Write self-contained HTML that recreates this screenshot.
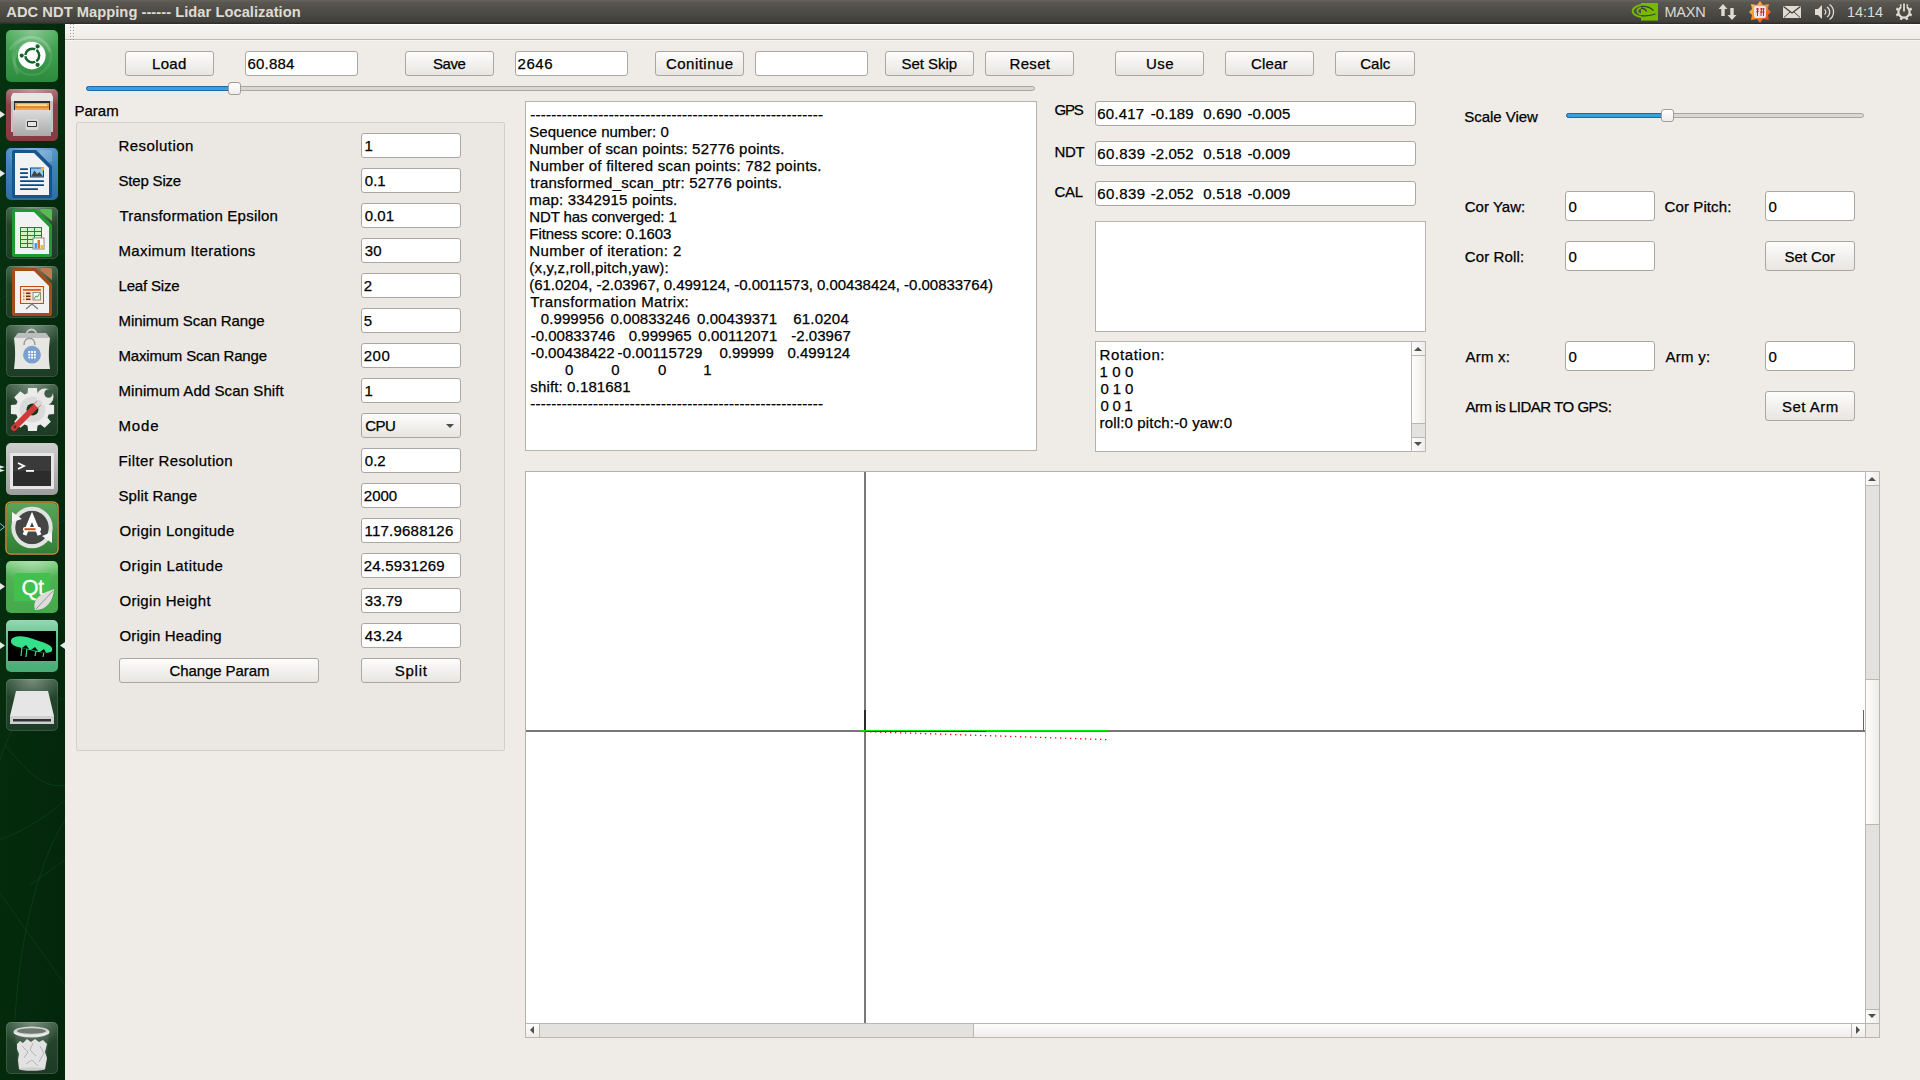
<!DOCTYPE html><html><head><meta charset="utf-8"><style>
html,body{margin:0;padding:0}
body{width:1920px;height:1080px;overflow:hidden;position:relative;background:#efebe7;font-family:"Liberation Sans",sans-serif;font-size:15px;color:#000}
.a{position:absolute}
.t{position:absolute;white-space:pre;line-height:17px;-webkit-text-stroke:0.25px currentColor}
</style></head><body>
<div class="a" style="left:0px;top:0px;width:1920px;height:24px;background:linear-gradient(#656359,#58564f 12%,#403f3b 92%,#2f2e2a 96%)"></div>
<div class="t" style="left:6.30px;top:4px;font-size:14.7px;font-weight:bold;color:#dfdbd2;letter-spacing:0.037px;-webkit-text-stroke:0.05px currentColor">ADC NDT Mapping ------ Lidar Localization</div>
<svg class="a" style="left:1620px;top:0" width="300" height="24" viewBox="1620 0 300 24"><defs><linearGradient id="imeg" x1="0" y1="0" x2="1" y2="1"><stop offset="0" stop-color="#f8d050"/><stop offset="0.5" stop-color="#f09030"/><stop offset="1" stop-color="#e02828"/></linearGradient></defs><defs><clipPath id="nvl"><rect x="1620" y="0" width="21" height="24"/></clipPath><clipPath id="nvr"><rect x="1641" y="0" width="17" height="24"/></clipPath></defs><rect x="1641" y="3" width="17" height="17.6" fill="#76b900"/><g clip-path="url(#nvl)" fill="none" stroke="#76b900"><ellipse cx="1644.5" cy="11" rx="11.8" ry="6.3" stroke-width="2"/><ellipse cx="1644.5" cy="11" rx="7.2" ry="3.9" stroke-width="1.8"/><ellipse cx="1644.5" cy="11" rx="3.2" ry="1.6" fill="#76b900" stroke-width="1"/></g><g clip-path="url(#nvr)" fill="none" stroke="#3c3b37" stroke-width="1.3"><path d="M1641 6.5 C1646 6 1651 8 1653.5 10.5"/><path d="M1641 15.5 C1646 17 1652 15 1655.5 14"/><path d="M1641 8 C1644 8.5 1646 10 1646.5 11.5"/></g><text x="1664.5" y="17" font-family="Liberation Sans" font-size="14.5" textLength="41.2" fill="#dfdbd2">MAXN</text><path d="M1723 4 L1727.5 9 L1724.7 9 L1724.7 16 L1721.3 16 L1721.3 9 L1718.5 9Z" fill="#dfdbd2"/><path d="M1732 20 L1736.5 15 L1733.7 15 L1733.7 8 L1730.3 8 L1730.3 15 L1727.5 15Z" fill="#dfdbd2"/><polygon points="1760,1 1763,5 1769,4 1768,9 1771,12 1768,15 1769,20 1763,19 1760,23 1757,19 1751,20 1752,15 1749,12 1752,9 1751,4 1757,5" fill="url(#imeg)"/><rect x="1754" y="6" width="12" height="12" rx="2" fill="#f2e4e4"/><path d="M1756 9 L1759 9 M1757.5 8 L1757.5 16 M1756 12 L1759 11 M1760 9 L1764.5 9 M1760 12 L1764.5 12 M1761.5 8 L1761 16 M1763.5 8 L1763.5 16" stroke="#d02030" stroke-width="1"/><rect x="1783" y="6" width="18" height="12" fill="#dfdbd2"/><path d="M1783.5 6.5 L1792 13 L1800.5 6.5" stroke="#3c3b37" stroke-width="1.2" fill="none"/><path d="M1784 17.5 L1790 12 M1800 17.5 L1794 12" stroke="#3c3b37" stroke-width="1"/><path d="M1815 9 L1818 9 L1822 5 L1822 19 L1818 15 L1815 15Z" fill="#dfdbd2"/><path d="M1824.5 9.5 A3 3 0 0 1 1824.5 14.5 M1827 7 A6 6 0 0 1 1827 17 M1829.5 4.5 A9 9 0 0 1 1829.5 19.5" stroke="#dfdbd2" stroke-width="1.3" fill="none"/><text x="1847" y="17" font-family="Liberation Sans" font-size="14.5" textLength="36" fill="#dfdbd2">14:14</text><circle cx="1904" cy="12" r="5.6" fill="none" stroke="#dfdbd2" stroke-width="2.2"/><g stroke="#dfdbd2" stroke-width="2.6"><path d="M1909.7 14.4 L1911.7 15.2"/><path d="M1906.4 17.7 L1907.2 19.7"/><path d="M1901.6 17.7 L1900.8 19.7"/><path d="M1898.3 14.4 L1896.3 15.2"/><path d="M1898.3 9.6 L1896.3 8.8"/><path d="M1901.6 6.3 L1900.8 4.3"/><path d="M1906.4 6.3 L1907.2 4.3"/><path d="M1909.7 9.6 L1911.7 8.8"/></g><rect x="1901.5" y="3" width="5" height="7" fill="#4a4944"/><rect x="1903.1" y="3.5" width="1.8" height="8" fill="#dfdbd2"/></svg>
<svg class="a" style="left:0;top:0" width="65" height="1080" viewBox="0 0 65 1080"><defs>
<linearGradient id="tdark" x1="0" y1="0" x2="0" y2="1"><stop offset="0" stop-color="#3a5a42"/><stop offset="0.35" stop-color="#24442c"/><stop offset="1" stop-color="#1d3c25"/></linearGradient>
<radialGradient id="shine" cx="0.5" cy="0" r="0.55"><stop offset="0" stop-color="#fff" stop-opacity="0.32"/><stop offset="1" stop-color="#fff" stop-opacity="0"/></radialGradient>
<linearGradient id="tgreen" x1="0" y1="0" x2="0" y2="1"><stop offset="0" stop-color="#4fae5e"/><stop offset="1" stop-color="#2b8a3c"/></linearGradient>
<linearGradient id="tblue" x1="0" y1="0" x2="0" y2="1"><stop offset="0" stop-color="#4a8fc4"/><stop offset="1" stop-color="#2c6fa6"/></linearGradient>
<linearGradient id="tred" x1="0" y1="0" x2="0" y2="1"><stop offset="0" stop-color="#a86a72"/><stop offset="0.3" stop-color="#8c424a"/><stop offset="1" stop-color="#883a42"/></linearGradient>
<linearGradient id="tgray" x1="0" y1="0" x2="0" y2="1"><stop offset="0" stop-color="#cfcfcf"/><stop offset="1" stop-color="#9c9c9c"/></linearGradient>
<linearGradient id="tqt" x1="0" y1="0" x2="0" y2="1"><stop offset="0" stop-color="#8ad48a"/><stop offset="0.3" stop-color="#4fb153"/><stop offset="1" stop-color="#45a84a"/></linearGradient>
<linearGradient id="tlid" x1="0" y1="0" x2="0" y2="1"><stop offset="0" stop-color="#98d8b4"/><stop offset="0.35" stop-color="#62c08e"/><stop offset="1" stop-color="#48ac76"/></linearGradient>
<linearGradient id="tupd" x1="0" y1="0" x2="0" y2="1"><stop offset="0" stop-color="#5aa55a"/><stop offset="1" stop-color="#2f7f34"/></linearGradient>
<linearGradient id="cab" x1="0" y1="0" x2="0" y2="1"><stop offset="0" stop-color="#dcdcdc"/><stop offset="1" stop-color="#a9a9a9"/></linearGradient>
<linearGradient id="bgl" x1="0" y1="0" x2="1" y2="1"><stop offset="0" stop-color="#063210"/><stop offset="0.5" stop-color="#042a0c"/><stop offset="1" stop-color="#03260b"/></linearGradient>
</defs><rect x="0" y="24" width="65" height="1056" fill="url(#bgl)"/><g stroke="#1e5a2a" stroke-opacity="0.35" stroke-width="1" fill="none"><path d="M0 893 L65 985"/><path d="M30 885 L65 860"/><path d="M0 300 L65 250"/><path d="M0 560 L65 520"/><path d="M0 760 C20 700 40 690 65 700"/><path d="M5 745 C25 770 45 790 65 785"/><path d="M15 1020 C20 930 40 860 65 820"/><path d="M0 840 C25 830 45 818 65 800"/></g><rect x="6" y="30" width="52" height="52" rx="5" fill="url(#tgreen)" /><rect x="6" y="30" width="52" height="52" rx="5" fill="url(#shine)"/><path d="M10 50 C20 32 44 34 50 52" fill="none" stroke="#fff" stroke-opacity="0.14" stroke-width="3"/><path d="M18 74 C10 60 16 46 30 42" fill="none" stroke="#fff" stroke-opacity="0.12" stroke-width="3"/><circle cx="32" cy="56" r="19" fill="none" stroke="#fff" stroke-opacity="0.1" stroke-width="2.5"/><circle cx="31.8" cy="55.6" r="13.8" fill="#fff"/><circle cx="32.3" cy="55.6" r="6.9" fill="none" stroke="#15642a" stroke-width="2.5"/><path d="M32.3  55.6 L37.30 46.94" stroke="#fff" stroke-width="1.3"/><circle cx="37.60" cy="46.42" r="2.1" fill="#15642a"/><path d="M32.3  55.6 L22.30 55.60" stroke="#fff" stroke-width="1.3"/><circle cx="21.70" cy="55.60" r="2.1" fill="#15642a"/><path d="M32.3  55.6 L37.30 64.26" stroke="#fff" stroke-width="1.3"/><circle cx="37.60" cy="64.78" r="2.1" fill="#15642a"/><rect x="6" y="89" width="52" height="52" rx="5" fill="url(#tred)" /><rect x="6" y="89" width="52" height="52" rx="5" fill="url(#shine)"/><path d="M13 93 L51 93 L53 97 L53 132 L11 132 L11 97Z" fill="#c4c4c4"/><path d="M13 93 L51 93 L53 97 L53 101 L11 101 L11 97Z" fill="#e6e6e6"/><rect x="14" y="101" width="36" height="9" fill="#2e2e2e"/><rect x="15" y="103" width="34" height="7" fill="#f0a848"/><rect x="17" y="104.5" width="30" height="1.2" fill="#fff4e0"/><rect x="15" y="106.5" width="34" height="1" fill="#d06a2a"/><rect x="13" y="110" width="38" height="26" fill="url(#cab)"/><rect x="25.5" y="119" width="13" height="11" rx="2" fill="#d8d8d8"/><rect x="27" y="121" width="10" height="6" rx="1" fill="#333"/><rect x="28" y="122" width="8" height="4" fill="#e4e4e4"/><rect x="6" y="148" width="52" height="52" rx="5" fill="url(#tblue)" /><rect x="6" y="148" width="52" height="52" rx="5" fill="url(#shine)"/><rect x="40" y="150" width="12" height="12" rx="2" fill="#fff" fill-opacity="0.15"/><path d="M12 152 Q12 150 14 150 L36 150 L52 166 L52 196 Q52 198 50 198 L14 198 Q12 198 12 196Z" fill="#15548c"/><path d="M15 153 L34 153 L49 168 L49 195 L15 195Z" fill="#f2f2f2"/><rect x="20" y="168.2" width="8" height="1.8" rx="0.5" fill="#0d4a84"/><rect x="20" y="172.2" width="8" height="1.8" rx="0.5" fill="#0d4a84"/><rect x="20" y="176.2" width="8" height="1.8" rx="0.5" fill="#0d4a84"/><rect x="20" y="180.2" width="24" height="1.8" rx="0.5" fill="#0d4a84"/><rect x="20" y="184.2" width="24" height="1.8" rx="0.5" fill="#0d4a84"/><rect x="20" y="188.2" width="18" height="1.8" rx="0.5" fill="#0d4a84"/><rect x="30" y="167.5" width="14" height="10" fill="#0d4a84"/><rect x="31" y="168.5" width="12" height="8" fill="#8ec8ee"/><path d="M31 176.5 L34.5 170.5 L37 174 L39.5 172 L43 176.5Z" fill="#444"/><circle cx="42.5" cy="169" r="1.8" fill="#e8c030"/><rect x="6" y="207" width="52" height="52" rx="5" fill="url(#tdark)" /><rect x="6.5" y="207.5" width="51" height="51" rx="4.5" fill="none" stroke="#fff" stroke-opacity="0.12"/><rect x="6" y="207" width="52" height="52" rx="5" fill="url(#shine)"/><path d="M40 211 Q40 209 42 209 L50 209 Q52 209 52 211 L52 221 Z" fill="#58bc50"/><path d="M12 211 Q12 209 14 209 L36 209 L52 225 L52 255 Q52 257 50 257 L14 257 Q12 257 12 255Z" fill="#1e9a30"/><path d="M15 212 L34 212 L49 227 L49 254 L15 254Z" fill="#f2f2f2"/><rect x="20" y="227" width="22" height="21" fill="#178a28"/><rect x="21" y="228" width="6" height="3" fill="#d2f2c8"/><rect x="28" y="228" width="6" height="3" fill="#d2f2c8"/><rect x="35" y="228" width="6" height="3" fill="#d2f2c8"/><rect x="21" y="232" width="6" height="3" fill="#d2f2c8"/><rect x="28" y="232" width="6" height="3" fill="#d2f2c8"/><rect x="35" y="232" width="6" height="3" fill="#d2f2c8"/><rect x="21" y="236" width="6" height="3" fill="#d2f2c8"/><rect x="28" y="236" width="6" height="3" fill="#d2f2c8"/><rect x="35" y="236" width="6" height="3" fill="#d2f2c8"/><rect x="21" y="240" width="6" height="3" fill="#d2f2c8"/><rect x="28" y="240" width="6" height="3" fill="#d2f2c8"/><rect x="35" y="240" width="6" height="3" fill="#d2f2c8"/><rect x="21" y="244" width="6" height="3" fill="#d2f2c8"/><rect x="28" y="244" width="6" height="3" fill="#d2f2c8"/><rect x="35" y="244" width="6" height="3" fill="#d2f2c8"/><rect x="33" y="238" width="11" height="11" fill="#fff" stroke="#888" stroke-width="1"/><rect x="34.5" y="243" width="2.5" height="5.5" fill="#3a9ee8"/><rect x="37.5" y="240" width="2.5" height="8.5" fill="#e8702a"/><rect x="40.5" y="245" width="2.5" height="3.5" fill="#f0c020"/><rect x="6" y="266" width="52" height="52" rx="5" fill="url(#tdark)" /><rect x="6.5" y="266.5" width="51" height="51" rx="4.5" fill="none" stroke="#fff" stroke-opacity="0.12"/><rect x="6" y="266" width="52" height="52" rx="5" fill="url(#shine)"/><path d="M40 270 Q40 268 42 268 L50 268 Q52 268 52 270 L52 280 Z" fill="#c07a50"/><path d="M12 270 Q12 268 14 268 L36 268 L52 284 L52 314 Q52 316 50 316 L14 316 Q12 316 12 314Z" fill="#a44c1a"/><path d="M15 271 L34 271 L49 286 L49 313 L15 313Z" fill="#f2f2f2"/><rect x="20" y="286" width="24" height="18" fill="#c04e14"/><rect x="21" y="287" width="22" height="16" fill="#fde6d6"/><rect x="23" y="289" width="18" height="1.8" fill="#d8601e"/><rect x="23" y="292.5" width="1.5" height="1.5" fill="#e8884a"/><rect x="26" y="292.5" width="4.5" height="1.6" fill="#7a2a0a"/><rect x="23" y="295.5" width="1.5" height="1.5" fill="#e8884a"/><rect x="26" y="295.5" width="4.5" height="1.6" fill="#7a2a0a"/><rect x="23" y="298.5" width="1.5" height="1.5" fill="#e8884a"/><rect x="26" y="298.5" width="4.5" height="1.6" fill="#7a2a0a"/><rect x="33" y="292.5" width="7.5" height="7.5" fill="#f4f4f4" stroke="#777" stroke-width="0.8"/><path d="M34 299 L36 296 L37.5 297 L39.5 293.5" stroke="#2a9a2a" stroke-width="0.9" fill="none"/><path d="M26 309 L32 304 L38 309" stroke="#777" stroke-width="1.2" fill="none"/><rect x="6" y="325" width="52" height="52" rx="5" fill="url(#tdark)" /><rect x="6.5" y="325.5" width="51" height="51" rx="4.5" fill="none" stroke="#fff" stroke-opacity="0.12"/><rect x="6" y="325" width="52" height="52" rx="5" fill="url(#shine)"/><path d="M26 337 C26 327 37 327 37 337" stroke="#c8c8c8" stroke-width="1.8" fill="none"/><path d="M18 333 L46 333 L50 338 L14 338Z" fill="#bdbdbd"/><path d="M14 338 L50 338 C48.5 350 48.5 358 50 369 L14 369 C15.5 358 15.5 350 14 338 Z" fill="#e6e6e3"/><path d="M24 345 C24 336 35 336 35 345" stroke="#9a9a9a" stroke-width="1.5" fill="none"/><circle cx="32" cy="354.7" r="8.9" fill="#7aa0d0"/><rect x="28.3" y="351.0" width="1.9" height="1.9" fill="#fff"/><rect x="28.3" y="353.8" width="1.9" height="1.9" fill="#fff"/><rect x="28.3" y="356.6" width="1.9" height="1.9" fill="#fff"/><rect x="31.1" y="351.0" width="1.9" height="1.9" fill="#fff"/><rect x="31.1" y="353.8" width="1.9" height="1.9" fill="#fff"/><rect x="31.1" y="356.6" width="1.9" height="1.9" fill="#fff"/><rect x="33.9" y="351.0" width="1.9" height="1.9" fill="#fff"/><rect x="33.9" y="353.8" width="1.9" height="1.9" fill="#fff"/><rect x="33.9" y="356.6" width="1.9" height="1.9" fill="#fff"/><rect x="6" y="384" width="52" height="52" rx="5" fill="url(#tdark)" /><rect x="6.5" y="384.5" width="51" height="51" rx="4.5" fill="none" stroke="#fff" stroke-opacity="0.12"/><rect x="6" y="384" width="52" height="52" rx="5" fill="url(#shine)"/><polygon points="48.7,404.5 54.1,405.1 54.1,413.9 48.7,414.5 47.5,417.4 50.8,421.7 44.7,427.8 40.4,424.5 37.5,425.7 36.9,431.1 28.1,431.1 27.5,425.7 24.6,424.5 20.3,427.8 14.2,421.7 17.5,417.4 16.3,414.5 10.9,413.9 10.9,405.1 16.3,404.5 17.5,401.6 14.2,397.3 20.3,391.2 24.6,394.5 27.5,393.3 28.1,387.9 36.9,387.9 37.5,393.3 40.4,394.5 44.7,391.2 50.8,397.3 47.5,401.6" fill="#ececec"/><circle cx="32.5" cy="409.5" r="13" fill="#dadada"/><circle cx="32.5" cy="409.5" r="6" fill="#143a1c"/><path d="M14 428 L38 404" stroke="#d03a36" stroke-width="6" stroke-linecap="round"/><circle cx="15" cy="427" r="1.4" fill="#2a3a2a"/><circle cx="45" cy="397" r="8.5" fill="#e8e8e8"/><circle cx="48.5" cy="393.5" r="4.2" fill="#3d5d45"/><path d="M48.5 393.5 L55 387 L55 393Z" fill="#3d5d45"/><path d="M36 406 L41 401" stroke="#d8d8d8" stroke-width="5"/><rect x="6" y="443" width="52" height="52" rx="5" fill="url(#tgray)" /><rect x="10" y="453" width="44" height="36" fill="#e6e6e6"/><rect x="13" y="456" width="38" height="30" fill="#2c2c2c"/><rect x="13" y="456" width="38" height="15" fill="#3a3a3a"/><path d="M18 463 L24 466 L18 469" stroke="#fff" stroke-width="1.8" fill="none"/><rect x="26" y="470" width="8" height="1.8" fill="#fff"/><rect x="6" y="502" width="52" height="52" rx="5" fill="none" stroke="#d09040" stroke-width="1.5"/><rect x="7" y="503" width="50" height="50" rx="4" fill="url(#tupd)"/><circle cx="32" cy="527.5" r="18.7" fill="none" stroke="#e2e2e2" stroke-width="4"/><circle cx="32" cy="527.5" r="16.5" fill="#454545"/><path d="M12 512 L22 519 L12 522Z" fill="#f4f4f4"/><path d="M52 543 L42 536 L52 532Z" fill="#f4f4f4"/><path d="M24.5 535 L32 517 L39.5 535" stroke="#fff" stroke-width="4" fill="none"/><rect x="23" y="527" width="18" height="4.5" rx="2" fill="#fff"/><rect x="24.5" y="528.2" width="11" height="2" fill="#e04a10"/><rect x="6" y="561" width="52" height="52" rx="5" fill="url(#tqt)" /><rect x="6" y="561" width="52" height="52" rx="5" fill="url(#shine)"/><path d="M17 573 L50 573 L50 601 L14 601 L14 576Z" fill="#41c04e"/><text x="21.5" y="595" font-family="Liberation Sans" font-size="22" textLength="22.5" fill="#fff" stroke="#fff" stroke-width="0.3">Qt</text><path d="M35 610 C32 599 40 594 54 589 C53 601 47 610 35 610Z" fill="#dedcdc"/><path d="M36 609 L53 591" stroke="#666" stroke-width="0.6"/><rect x="6" y="620" width="52" height="52" rx="5" fill="url(#tlid)" /><rect x="8" y="631" width="48" height="30" fill="#000"/><path d="M11 640 C14 634 26 636 36 640 C46 643 54 646 52 651 C50 654 40 653 30 650 C20 647 10 647 11 640Z" fill="#35e08a"/><path d="M22 647 L21 656 M27 648 L26 657 M36 651 L35 656 M44 652 L43 657" stroke="#35e08a" stroke-width="1.2"/><path d="M22 648 L26 645 L29 649Z M31 650 L35 647 L38 651Z M40 652 L44 649 L46 653Z" fill="#000"/><rect x="6" y="679" width="52" height="52" rx="5" fill="url(#tdark)" /><rect x="6.5" y="679.5" width="51" height="51" rx="4.5" fill="none" stroke="#fff" stroke-opacity="0.12"/><rect x="6" y="679" width="52" height="52" rx="5" fill="url(#shine)"/><path d="M16 691 L48 691 L54 716 L10 716Z" fill="#e6e6e6"/><rect x="10" y="716" width="44" height="8" fill="#d0d0d0"/><rect x="13" y="719" width="38" height="2.5" fill="#333"/><rect x="6" y="1022" width="52" height="52" rx="5" fill="url(#tdark)" /><rect x="6.5" y="1022.5" width="51" height="51" rx="4.5" fill="none" stroke="#fff" stroke-opacity="0.12"/><rect x="6" y="1022" width="52" height="52" rx="5" fill="url(#shine)"/><path d="M15 1032 L49 1032 L46 1069 L18 1069Z" fill="#fff" fill-opacity="0.07"/><path d="M17 1044 L20 1041 L23 1043 L27 1039 L31 1042 L35 1039 L39 1042 L43 1040 L47 1044 L45 1052 L47 1058 L45 1069 L19 1069 L18 1060 L19 1054 L17 1049Z" fill="#e2e2e2"/><path d="M22 1046 L28 1052 L24 1058 M33 1043 L30 1050 L36 1056 M40 1046 L44 1053 L39 1062 M26 1064 L32 1060 L38 1066" stroke="#b4b4b4" stroke-width="1" fill="none"/><ellipse cx="31.5" cy="1032" rx="18" ry="5.5" fill="#d6d6d6"/><ellipse cx="31.5" cy="1031" rx="14.5" ry="2.8" fill="#6c7a70"/><path d="M14 1033 Q31.5 1039 49 1033" stroke="#f4f4f4" stroke-width="1.2" fill="none"/><ellipse cx="32" cy="1069" rx="13" ry="1.8" fill="#cfcfcf"/><g fill="#e8e8e8"><path d="M0 111 L5 114.5 L0 118Z"/><path d="M0 170 L5 173.5 L0 177Z"/><path d="M0 465.5 L5 467 L0 468.5Z"/><path d="M0 469 L5 470.5 L0 472Z"/><path d="M0 583 L5 586.5 L0 590Z"/><path d="M0 642 L5 645.5 L0 649Z"/><path d="M65 642 L60 645.5 L65 649Z"/></g><path d="M0 523.5 L4.5 527 L0 530.5" stroke="#6ac8e8" stroke-width="1" fill="none"/></svg>
<div class="a" style="left:65px;top:24px;width:1855px;height:1056px;background:#efebe7"></div>
<div class="a" style="left:65px;top:24px;width:1855px;height:15px;background:linear-gradient(#f8f6f3,#eeebe7)"></div>
<div class="a" style="left:65px;top:24px;width:1855px;height:1px;background:#fdfdfc"></div>
<div class="a" style="left:65px;top:39px;width:1855px;height:1px;background:#bcb8b3"></div>
<div class="a" style="left:65px;top:40px;width:1855px;height:1px;background:#f6f4f1"></div>
<svg class="a" style="left:68px;top:22px" width="10" height="22"><rect x="3" y="3" width="1" height="1" fill="#fbfaf8"/><rect x="2" y="2" width="1" height="1" fill="#9a9894"/><rect x="3" y="6" width="1" height="1" fill="#fbfaf8"/><rect x="2" y="5" width="1" height="1" fill="#9a9894"/><rect x="3" y="9" width="1" height="1" fill="#fbfaf8"/><rect x="2" y="8" width="1" height="1" fill="#9a9894"/><rect x="3" y="12" width="1" height="1" fill="#fbfaf8"/><rect x="2" y="11" width="1" height="1" fill="#9a9894"/><rect x="3" y="15" width="1" height="1" fill="#fbfaf8"/><rect x="2" y="14" width="1" height="1" fill="#9a9894"/><rect x="3" y="18" width="1" height="1" fill="#fbfaf8"/><rect x="2" y="17" width="1" height="1" fill="#9a9894"/><rect x="6" y="3" width="1" height="1" fill="#fbfaf8"/><rect x="5" y="2" width="1" height="1" fill="#9a9894"/><rect x="6" y="6" width="1" height="1" fill="#fbfaf8"/><rect x="5" y="5" width="1" height="1" fill="#9a9894"/><rect x="6" y="9" width="1" height="1" fill="#fbfaf8"/><rect x="5" y="8" width="1" height="1" fill="#9a9894"/><rect x="6" y="12" width="1" height="1" fill="#fbfaf8"/><rect x="5" y="11" width="1" height="1" fill="#9a9894"/><rect x="6" y="15" width="1" height="1" fill="#fbfaf8"/><rect x="5" y="14" width="1" height="1" fill="#9a9894"/><rect x="6" y="18" width="1" height="1" fill="#fbfaf8"/><rect x="5" y="17" width="1" height="1" fill="#9a9894"/></svg>
<div class="a" style="left:125px;top:51px;width:89px;height:25px;box-sizing:border-box;border:1px solid #aaa6a1;border-radius:3px;background:linear-gradient(#fdfdfc,#e8e5e1)"></div>
<div class="t" style="left:152.00px;top:55px;font-size:15px;font-weight:normal;color:#000;letter-spacing:0.333px">Load</div>
<div class="a" style="left:245px;top:51px;width:113px;height:25px;box-sizing:border-box;border:1px solid #aba7a2;border-radius:3px;background:#fff"></div>
<div class="t" style="left:247.50px;top:55px;font-size:15px;font-weight:normal;color:#000;letter-spacing:0.200px">60.884</div>
<div class="a" style="left:405px;top:51px;width:89px;height:25px;box-sizing:border-box;border:1px solid #aaa6a1;border-radius:3px;background:linear-gradient(#fdfdfc,#e8e5e1)"></div>
<div class="t" style="left:433.00px;top:55px;font-size:15px;font-weight:normal;color:#000;letter-spacing:-0.417px">Save</div>
<div class="a" style="left:515px;top:51px;width:113px;height:25px;box-sizing:border-box;border:1px solid #aba7a2;border-radius:3px;background:#fff"></div>
<div class="t" style="left:517.50px;top:55px;font-size:15px;font-weight:normal;color:#000;letter-spacing:0.583px">2646</div>
<div class="a" style="left:655px;top:51px;width:89px;height:25px;box-sizing:border-box;border:1px solid #aaa6a1;border-radius:3px;background:linear-gradient(#fdfdfc,#e8e5e1)"></div>
<div class="t" style="left:666.00px;top:55px;font-size:15px;font-weight:normal;color:#000;letter-spacing:0.469px">Conitinue</div>
<div class="a" style="left:755px;top:51px;width:113px;height:25px;box-sizing:border-box;border:1px solid #aba7a2;border-radius:3px;background:#fff"></div>
<div class="a" style="left:885px;top:51px;width:89px;height:25px;box-sizing:border-box;border:1px solid #aaa6a1;border-radius:3px;background:linear-gradient(#fdfdfc,#e8e5e1)"></div>
<div class="t" style="left:901.50px;top:55px;font-size:15px;font-weight:normal;color:#000;letter-spacing:-0.036px">Set Skip</div>
<div class="a" style="left:985px;top:51px;width:89px;height:25px;box-sizing:border-box;border:1px solid #aaa6a1;border-radius:3px;background:linear-gradient(#fdfdfc,#e8e5e1)"></div>
<div class="t" style="left:1009.60px;top:55px;font-size:15px;font-weight:normal;color:#000;letter-spacing:0.287px">Reset</div>
<div class="a" style="left:1115px;top:51px;width:89px;height:25px;box-sizing:border-box;border:1px solid #aaa6a1;border-radius:3px;background:linear-gradient(#fdfdfc,#e8e5e1)"></div>
<div class="t" style="left:1146.00px;top:55px;font-size:15px;font-weight:normal;color:#000;letter-spacing:0.500px">Use</div>
<div class="a" style="left:1225px;top:51px;width:89px;height:25px;box-sizing:border-box;border:1px solid #aaa6a1;border-radius:3px;background:linear-gradient(#fdfdfc,#e8e5e1)"></div>
<div class="t" style="left:1251.00px;top:55px;font-size:15px;font-weight:normal;color:#000;letter-spacing:0.188px">Clear</div>
<div class="a" style="left:1335px;top:51px;width:80px;height:25px;box-sizing:border-box;border:1px solid #aaa6a1;border-radius:3px;background:linear-gradient(#fdfdfc,#e8e5e1)"></div>
<div class="t" style="left:1360.25px;top:55px;font-size:15px;font-weight:normal;color:#000;letter-spacing:0.000px">Calc</div>
<div class="a" style="left:86px;top:86px;width:949px;height:5px;box-sizing:border-box;border:1px solid #a9a5a0;border-radius:3px;background:#d9d7d3"></div>
<div class="a" style="left:86px;top:86px;width:146px;height:5px;box-sizing:border-box;border:1px solid #1f6aa3;border-radius:3px;background:#3d9de3"></div>
<div class="a" style="left:228px;top:82px;width:13px;height:13px;box-sizing:border-box;border:1px solid #a19d98;border-radius:3px;background:linear-gradient(#ffffff,#efedea)"></div>
<div class="t" style="left:74.50px;top:102px;font-size:15px;font-weight:normal;color:#000;letter-spacing:0.000px">Param</div>
<div class="a" style="left:76px;top:122px;width:429px;height:629px;box-sizing:border-box;border:1px solid #d3cfca;border-radius:2px;background:#ebe8e4"></div>
<div class="t" style="left:118.50px;top:137px;font-size:15px;font-weight:normal;color:#000;letter-spacing:0.444px">Resolution</div>
<div class="a" style="left:361px;top:133px;width:100px;height:25px;box-sizing:border-box;border:1px solid #aba7a2;border-radius:3px;background:#fff"></div>
<div class="t" style="left:364.50px;top:137px;font-size:15px;font-weight:normal;color:#000;letter-spacing:0.000px">1</div>
<div class="t" style="left:118.50px;top:172px;font-size:15px;font-weight:normal;color:#000;letter-spacing:-0.188px">Step Size</div>
<div class="a" style="left:361px;top:168px;width:100px;height:25px;box-sizing:border-box;border:1px solid #aba7a2;border-radius:3px;background:#fff"></div>
<div class="t" style="left:364.80px;top:172px;font-size:15px;font-weight:normal;color:#000;letter-spacing:0.000px">0.1</div>
<div class="t" style="left:119.50px;top:207px;font-size:15px;font-weight:normal;color:#000;letter-spacing:0.226px">Transformation Epsilon</div>
<div class="a" style="left:361px;top:203px;width:100px;height:25px;box-sizing:border-box;border:1px solid #aba7a2;border-radius:3px;background:#fff"></div>
<div class="t" style="left:364.80px;top:207px;font-size:15px;font-weight:normal;color:#000;letter-spacing:0.000px">0.01</div>
<div class="t" style="left:118.50px;top:242px;font-size:15px;font-weight:normal;color:#000;letter-spacing:0.353px">Maximum Iterations</div>
<div class="a" style="left:361px;top:238px;width:100px;height:25px;box-sizing:border-box;border:1px solid #aba7a2;border-radius:3px;background:#fff"></div>
<div class="t" style="left:364.80px;top:242px;font-size:15px;font-weight:normal;color:#000;letter-spacing:0.000px">30</div>
<div class="t" style="left:118.50px;top:277px;font-size:15px;font-weight:normal;color:#000;letter-spacing:-0.188px">Leaf Size</div>
<div class="a" style="left:361px;top:273px;width:100px;height:25px;box-sizing:border-box;border:1px solid #aba7a2;border-radius:3px;background:#fff"></div>
<div class="t" style="left:363.80px;top:277px;font-size:15px;font-weight:normal;color:#000;letter-spacing:0.000px">2</div>
<div class="t" style="left:118.50px;top:312px;font-size:15px;font-weight:normal;color:#000;letter-spacing:-0.088px">Minimum Scan Range</div>
<div class="a" style="left:361px;top:308px;width:100px;height:25px;box-sizing:border-box;border:1px solid #aba7a2;border-radius:3px;background:#fff"></div>
<div class="t" style="left:363.80px;top:312px;font-size:15px;font-weight:normal;color:#000;letter-spacing:0.000px">5</div>
<div class="t" style="left:118.50px;top:347px;font-size:15px;font-weight:normal;color:#000;letter-spacing:-0.191px">Maximum Scan Range</div>
<div class="a" style="left:361px;top:343px;width:100px;height:25px;box-sizing:border-box;border:1px solid #aba7a2;border-radius:3px;background:#fff"></div>
<div class="t" style="left:363.80px;top:347px;font-size:15px;font-weight:normal;color:#000;letter-spacing:0.475px">200</div>
<div class="t" style="left:118.50px;top:382px;font-size:15px;font-weight:normal;color:#000;letter-spacing:0.083px">Minimum Add Scan Shift</div>
<div class="a" style="left:361px;top:378px;width:100px;height:25px;box-sizing:border-box;border:1px solid #aba7a2;border-radius:3px;background:#fff"></div>
<div class="t" style="left:364.50px;top:382px;font-size:15px;font-weight:normal;color:#000;letter-spacing:0.000px">1</div>
<div class="t" style="left:118.50px;top:417px;font-size:15px;font-weight:normal;color:#000;letter-spacing:0.833px">Mode</div>
<div class="a" style="left:361px;top:413px;width:100px;height:25px;box-sizing:border-box;border:1px solid #aaa6a1;border-radius:3px;background:linear-gradient(#fdfdfc,#e8e5e1)"></div>
<div class="t" style="left:365.25px;top:417px;font-size:15px;font-weight:normal;color:#000;letter-spacing:-0.500px">CPU</div>
<div class="a" style="left:446px;top:424px;width:0;height:0;border-left:4px solid transparent;border-right:4px solid transparent;border-top:4px solid #4c4c4c"></div>
<div class="t" style="left:118.50px;top:452px;font-size:15px;font-weight:normal;color:#000;letter-spacing:0.359px">Filter Resolution</div>
<div class="a" style="left:361px;top:448px;width:100px;height:25px;box-sizing:border-box;border:1px solid #aba7a2;border-radius:3px;background:#fff"></div>
<div class="t" style="left:364.80px;top:452px;font-size:15px;font-weight:normal;color:#000;letter-spacing:0.000px">0.2</div>
<div class="t" style="left:118.50px;top:487px;font-size:15px;font-weight:normal;color:#000;letter-spacing:0.100px">Split Range</div>
<div class="a" style="left:361px;top:483px;width:100px;height:25px;box-sizing:border-box;border:1px solid #aba7a2;border-radius:3px;background:#fff"></div>
<div class="t" style="left:363.80px;top:487px;font-size:15px;font-weight:normal;color:#000;letter-spacing:0.000px">2000</div>
<div class="t" style="left:119.50px;top:522px;font-size:15px;font-weight:normal;color:#000;letter-spacing:0.317px">Origin Longitude</div>
<div class="a" style="left:361px;top:518px;width:100px;height:25px;box-sizing:border-box;border:1px solid #aba7a2;border-radius:3px;background:#fff"></div>
<div class="t" style="left:364.50px;top:522px;font-size:15px;font-weight:normal;color:#000;letter-spacing:0.225px">117.9688126</div>
<div class="t" style="left:119.50px;top:557px;font-size:15px;font-weight:normal;color:#000;letter-spacing:0.411px">Origin Latitude</div>
<div class="a" style="left:361px;top:553px;width:100px;height:25px;box-sizing:border-box;border:1px solid #aba7a2;border-radius:3px;background:#fff"></div>
<div class="t" style="left:363.80px;top:557px;font-size:15px;font-weight:normal;color:#000;letter-spacing:0.161px">24.5931269</div>
<div class="t" style="left:119.50px;top:592px;font-size:15px;font-weight:normal;color:#000;letter-spacing:0.292px">Origin Height</div>
<div class="a" style="left:361px;top:588px;width:100px;height:25px;box-sizing:border-box;border:1px solid #aba7a2;border-radius:3px;background:#fff"></div>
<div class="t" style="left:364.80px;top:592px;font-size:15px;font-weight:normal;color:#000;letter-spacing:0.000px">33.79</div>
<div class="t" style="left:119.50px;top:627px;font-size:15px;font-weight:normal;color:#000;letter-spacing:0.154px">Origin Heading</div>
<div class="a" style="left:361px;top:623px;width:100px;height:25px;box-sizing:border-box;border:1px solid #aba7a2;border-radius:3px;background:#fff"></div>
<div class="t" style="left:364.80px;top:627px;font-size:15px;font-weight:normal;color:#000;letter-spacing:0.000px">43.24</div>
<div class="a" style="left:119px;top:658px;width:200px;height:25px;box-sizing:border-box;border:1px solid #aaa6a1;border-radius:3px;background:linear-gradient(#fdfdfc,#e8e5e1)"></div>
<div class="t" style="left:169.50px;top:662px;font-size:15px;font-weight:normal;color:#000;letter-spacing:-0.091px">Change Param</div>
<div class="a" style="left:361px;top:658px;width:100px;height:25px;box-sizing:border-box;border:1px solid #aaa6a1;border-radius:3px;background:linear-gradient(#fdfdfc,#e8e5e1)"></div>
<div class="t" style="left:394.75px;top:662px;font-size:15px;font-weight:normal;color:#000;letter-spacing:0.750px">Split</div>
<div class="a" style="left:525px;top:101px;width:512px;height:350px;box-sizing:border-box;border:1px solid #b5b1ac;background:#fff"></div>
<div class="t" style="left:530.30px;top:106px;font-size:15px;font-weight:normal;color:#000;letter-spacing:0.235px">--------------------------------------------------------</div>
<div class="t" style="left:529.30px;top:123px;font-size:15px;font-weight:normal;color:#000;letter-spacing:0.012px">Sequence number: 0</div>
<div class="t" style="left:529.30px;top:140px;font-size:15px;font-weight:normal;color:#000;letter-spacing:0.191px">Number of scan points: 52776 points.</div>
<div class="t" style="left:529.30px;top:157px;font-size:15px;font-weight:normal;color:#000;letter-spacing:0.267px">Number of filtered scan points: 782 points.</div>
<div class="t" style="left:530.30px;top:174px;font-size:15px;font-weight:normal;color:#000;letter-spacing:0.212px">transformed_scan_ptr: 52776 points.</div>
<div class="t" style="left:529.30px;top:191px;font-size:15px;font-weight:normal;color:#000;letter-spacing:0.195px">map: 3342915 points.</div>
<div class="t" style="left:529.30px;top:208px;font-size:15px;font-weight:normal;color:#000;letter-spacing:-0.121px">NDT has converged: 1</div>
<div class="t" style="left:529.30px;top:225px;font-size:15px;font-weight:normal;color:#000;letter-spacing:-0.065px">Fitness score: 0.1603</div>
<div class="t" style="left:529.30px;top:242px;font-size:15px;font-weight:normal;color:#000;letter-spacing:0.367px">Number of iteration: 2</div>
<div class="t" style="left:529.30px;top:259px;font-size:15px;font-weight:normal;color:#000;letter-spacing:0.214px">(x,y,z,roll,pitch,yaw):</div>
<div class="t" style="left:529.30px;top:276px;font-size:15px;font-weight:normal;color:#000;letter-spacing:-0.035px">(61.0204, -2.03967, 0.499124, -0.0011573, 0.00438424, -0.00833764)</div>
<div class="t" style="left:530.30px;top:293px;font-size:15px;font-weight:normal;color:#000;letter-spacing:0.426px">Transformation Matrix:</div>
<div class="t" style="left:540.75px;top:310px;font-size:15px;font-weight:normal;color:#000;letter-spacing:0.107px">0.999956</div>
<div class="t" style="left:610.50px;top:310px;font-size:15px;font-weight:normal;color:#000;letter-spacing:0.028px">0.00833246</div>
<div class="t" style="left:697.00px;top:310px;font-size:15px;font-weight:normal;color:#000;letter-spacing:0.083px">0.00439371</div>
<div class="t" style="left:793.25px;top:310px;font-size:15px;font-weight:normal;color:#000;letter-spacing:0.208px">61.0204</div>
<div class="t" style="left:530.75px;top:327px;font-size:15px;font-weight:normal;color:#000;letter-spacing:0.000px">-0.00833746</div>
<div class="t" style="left:628.75px;top:327px;font-size:15px;font-weight:normal;color:#000;letter-spacing:0.036px">0.999965</div>
<div class="t" style="left:698.25px;top:327px;font-size:15px;font-weight:normal;color:#000;letter-spacing:0.111px">0.00112071</div>
<div class="t" style="left:791.25px;top:327px;font-size:15px;font-weight:normal;color:#000;letter-spacing:0.036px">-2.03967</div>
<div class="t" style="left:530.75px;top:344px;font-size:15px;font-weight:normal;color:#000;letter-spacing:-0.050px">-0.00438422</div>
<div class="t" style="left:617.50px;top:344px;font-size:15px;font-weight:normal;color:#000;letter-spacing:0.175px">-0.00115729</div>
<div class="t" style="left:719.50px;top:344px;font-size:15px;font-weight:normal;color:#000;letter-spacing:0.000px">0.99999</div>
<div class="t" style="left:787.50px;top:344px;font-size:15px;font-weight:normal;color:#000;letter-spacing:0.000px">0.499124</div>
<div class="t" style="left:565.00px;top:361px;font-size:15px;font-weight:normal;color:#000;letter-spacing:0.000px">0</div>
<div class="t" style="left:611.25px;top:361px;font-size:15px;font-weight:normal;color:#000;letter-spacing:0.000px">0</div>
<div class="t" style="left:658.00px;top:361px;font-size:15px;font-weight:normal;color:#000;letter-spacing:0.000px">0</div>
<div class="t" style="left:703.25px;top:361px;font-size:15px;font-weight:normal;color:#000;letter-spacing:0.000px">1</div>
<div class="t" style="left:530.30px;top:378px;font-size:15px;font-weight:normal;color:#000;letter-spacing:0.139px">shift: 0.181681</div>
<div class="t" style="left:530.30px;top:395px;font-size:15px;font-weight:normal;color:#000;letter-spacing:0.235px">--------------------------------------------------------</div>
<div class="t" style="left:1054.50px;top:101px;font-size:15px;font-weight:normal;color:#000;letter-spacing:-1.250px">GPS</div>
<div class="a" style="left:1095px;top:101px;width:321px;height:25px;box-sizing:border-box;border:1px solid #aba7a2;border-radius:3px;background:#fff"></div>
<div class="t" style="left:1097.25px;top:105px;font-size:15px;font-weight:normal;color:#000;letter-spacing:0.200px">60.417</div>
<div class="t" style="left:1150.75px;top:105px;font-size:15px;font-weight:normal;color:#000;letter-spacing:0.050px">-0.189</div>
<div class="t" style="left:1203.25px;top:105px;font-size:15px;font-weight:normal;color:#000;letter-spacing:0.188px">0.690</div>
<div class="t" style="left:1247.50px;top:105px;font-size:15px;font-weight:normal;color:#000;letter-spacing:0.050px">-0.005</div>
<div class="t" style="left:1054.50px;top:143px;font-size:15px;font-weight:normal;color:#000;letter-spacing:-0.375px">NDT</div>
<div class="a" style="left:1095px;top:141px;width:321px;height:25px;box-sizing:border-box;border:1px solid #aba7a2;border-radius:3px;background:#fff"></div>
<div class="t" style="left:1097.25px;top:145px;font-size:15px;font-weight:normal;color:#000;letter-spacing:0.400px">60.839</div>
<div class="t" style="left:1150.75px;top:145px;font-size:15px;font-weight:normal;color:#000;letter-spacing:0.050px">-2.052</div>
<div class="t" style="left:1203.25px;top:145px;font-size:15px;font-weight:normal;color:#000;letter-spacing:0.188px">0.518</div>
<div class="t" style="left:1247.50px;top:145px;font-size:15px;font-weight:normal;color:#000;letter-spacing:0.050px">-0.009</div>
<div class="t" style="left:1054.50px;top:183px;font-size:15px;font-weight:normal;color:#000;letter-spacing:-0.250px">CAL</div>
<div class="a" style="left:1095px;top:181px;width:321px;height:25px;box-sizing:border-box;border:1px solid #aba7a2;border-radius:3px;background:#fff"></div>
<div class="t" style="left:1097.25px;top:185px;font-size:15px;font-weight:normal;color:#000;letter-spacing:0.400px">60.839</div>
<div class="t" style="left:1150.75px;top:185px;font-size:15px;font-weight:normal;color:#000;letter-spacing:0.050px">-2.052</div>
<div class="t" style="left:1203.25px;top:185px;font-size:15px;font-weight:normal;color:#000;letter-spacing:0.188px">0.518</div>
<div class="t" style="left:1247.50px;top:185px;font-size:15px;font-weight:normal;color:#000;letter-spacing:0.050px">-0.009</div>
<div class="a" style="left:1095px;top:221px;width:331px;height:111px;box-sizing:border-box;border:1px solid #b5b1ac;background:#fff"></div>
<div class="a" style="left:1095px;top:341px;width:331px;height:111px;box-sizing:border-box;border:1px solid #b5b1ac;background:#fff"></div>
<div class="t" style="left:1099.50px;top:346px;font-size:15px;font-weight:normal;color:#000;letter-spacing:0.625px">Rotation:</div>
<div class="t" style="left:1099.50px;top:363px;font-size:15px;font-weight:normal;color:#000;letter-spacing:0.125px">1 0 0</div>
<div class="t" style="left:1100.50px;top:380px;font-size:15px;font-weight:normal;color:#000;letter-spacing:-0.125px">0 1 0</div>
<div class="t" style="left:1100.50px;top:397px;font-size:15px;font-weight:normal;color:#000;letter-spacing:-0.312px">0 0 1</div>
<div class="t" style="left:1099.50px;top:414px;font-size:15px;font-weight:normal;color:#000;letter-spacing:0.163px">roll:0 pitch:-0 yaw:0</div>
<div class="a" style="left:1411px;top:341px;width:15px;height:111px;box-sizing:border-box;border:1px solid #bab6b1;background:#e4e2df"></div>
<div class="a" style="left:1412px;top:342px;width:13px;height:13px;background:linear-gradient(90deg,#fdfdfc,#efedea)"></div>
<div class="a" style="left:1411px;top:355px;width:15px;height:1px;background:#bab6b1"></div>
<div class="a" style="left:1412px;top:356px;width:13px;height:67px;background:linear-gradient(90deg,#fdfdfc,#efedea)"></div>
<div class="a" style="left:1411px;top:423px;width:15px;height:1px;background:#bab6b1"></div>
<div class="a" style="left:1411px;top:437px;width:15px;height:1px;background:#bab6b1"></div>
<div class="a" style="left:1412px;top:438px;width:13px;height:13px;background:linear-gradient(90deg,#fdfdfc,#efedea)"></div>
<div class="a" style="left:1414px;top:347px;width:0;height:0;border-left:4px solid transparent;border-right:4px solid transparent;border-bottom:4px solid #505050"></div>
<div class="a" style="left:1414px;top:442px;width:0;height:0;border-left:4px solid transparent;border-right:4px solid transparent;border-top:4px solid #505050"></div>
<div class="t" style="left:1464.25px;top:108px;font-size:15px;font-weight:normal;color:#000;letter-spacing:-0.028px">Scale View</div>
<div class="a" style="left:1566px;top:113px;width:298px;height:5px;box-sizing:border-box;border:1px solid #a9a5a0;border-radius:3px;background:#d9d7d3"></div>
<div class="a" style="left:1566px;top:113px;width:99px;height:5px;box-sizing:border-box;border:1px solid #1f6aa3;border-radius:3px;background:#3d9de3"></div>
<div class="a" style="left:1661px;top:109px;width:13px;height:13px;box-sizing:border-box;border:1px solid #a19d98;border-radius:3px;background:linear-gradient(#ffffff,#efedea)"></div>
<div class="t" style="left:1464.70px;top:198px;font-size:15px;font-weight:normal;color:#000;letter-spacing:0.043px">Cor Yaw:</div>
<div class="a" style="left:1565px;top:191px;width:90px;height:30px;box-sizing:border-box;border:1px solid #aba7a2;border-radius:3px;background:#fff"></div>
<div class="t" style="left:1568.60px;top:198px;font-size:15px;font-weight:normal;color:#000;letter-spacing:0.000px">0</div>
<div class="t" style="left:1664.50px;top:198px;font-size:15px;font-weight:normal;color:#000;letter-spacing:0.111px">Cor Pitch:</div>
<div class="a" style="left:1765px;top:191px;width:90px;height:30px;box-sizing:border-box;border:1px solid #aba7a2;border-radius:3px;background:#fff"></div>
<div class="t" style="left:1768.60px;top:198px;font-size:15px;font-weight:normal;color:#000;letter-spacing:0.000px">0</div>
<div class="t" style="left:1464.70px;top:248px;font-size:15px;font-weight:normal;color:#000;letter-spacing:0.150px">Cor Roll:</div>
<div class="a" style="left:1565px;top:241px;width:90px;height:30px;box-sizing:border-box;border:1px solid #aba7a2;border-radius:3px;background:#fff"></div>
<div class="t" style="left:1568.60px;top:248px;font-size:15px;font-weight:normal;color:#000;letter-spacing:0.000px">0</div>
<div class="a" style="left:1765px;top:241px;width:90px;height:30px;box-sizing:border-box;border:1px solid #aaa6a1;border-radius:3px;background:linear-gradient(#fdfdfc,#e8e5e1)"></div>
<div class="t" style="left:1784.50px;top:248px;font-size:15px;font-weight:normal;color:#000;letter-spacing:-0.042px">Set Cor</div>
<div class="t" style="left:1465.50px;top:348px;font-size:15px;font-weight:normal;color:#000;letter-spacing:0.240px">Arm x:</div>
<div class="a" style="left:1565px;top:341px;width:90px;height:30px;box-sizing:border-box;border:1px solid #aba7a2;border-radius:3px;background:#fff"></div>
<div class="t" style="left:1568.60px;top:348px;font-size:15px;font-weight:normal;color:#000;letter-spacing:0.000px">0</div>
<div class="t" style="left:1665.40px;top:348px;font-size:15px;font-weight:normal;color:#000;letter-spacing:0.300px">Arm y:</div>
<div class="a" style="left:1765px;top:341px;width:90px;height:30px;box-sizing:border-box;border:1px solid #aba7a2;border-radius:3px;background:#fff"></div>
<div class="t" style="left:1768.60px;top:348px;font-size:15px;font-weight:normal;color:#000;letter-spacing:0.000px">0</div>
<div class="t" style="left:1465.50px;top:398px;font-size:15px;font-weight:normal;color:#000;letter-spacing:-0.474px">Arm is LIDAR TO GPS:</div>
<div class="a" style="left:1765px;top:391px;width:90px;height:30px;box-sizing:border-box;border:1px solid #aaa6a1;border-radius:3px;background:linear-gradient(#fdfdfc,#e8e5e1)"></div>
<div class="t" style="left:1781.90px;top:398px;font-size:15px;font-weight:normal;color:#000;letter-spacing:0.500px">Set Arm</div>
<div class="a" style="left:525px;top:471px;width:1355px;height:567px;box-sizing:border-box;border:1px solid #b5b1ac;background:#fff"></div>
<div class="a" style="left:864px;top:472px;width:2px;height:551px;background:#787878"></div>
<div class="a" style="left:526px;top:730px;width:1339px;height:2px;background:#787878"></div>
<div class="a" style="left:864px;top:710px;width:2px;height:21px;background:#2a2a2a"></div>
<div class="a" style="left:1863px;top:710px;width:1px;height:21px;background:#666"></div>
<div class="a" style="left:861px;top:730px;width:247px;height:1px;background:#00ee00"></div>
<div class="a" style="left:865px;top:731px;width:121px;height:1px;background:#333"></div>
<svg class="a" style="left:0;top:0" width="1920" height="1080" fill="#ff0000"><rect x="865" y="731.0" width="1.3" height="1.3"/><rect x="870" y="731.2" width="1.3" height="1.3"/><rect x="875" y="731.3" width="1.3" height="1.3"/><rect x="880" y="731.5" width="1.3" height="1.3"/><rect x="885" y="731.7" width="1.3" height="1.3"/><rect x="890" y="731.8" width="1.3" height="1.3"/><rect x="895" y="732.0" width="1.3" height="1.3"/><rect x="900" y="732.2" width="1.3" height="1.3"/><rect x="905" y="732.3" width="1.3" height="1.3"/><rect x="910" y="732.5" width="1.3" height="1.3"/><rect x="915" y="732.6" width="1.3" height="1.3"/><rect x="920" y="732.8" width="1.3" height="1.3"/><rect x="925" y="733.0" width="1.3" height="1.3"/><rect x="930" y="733.1" width="1.3" height="1.3"/><rect x="935" y="733.3" width="1.3" height="1.3"/><rect x="940" y="733.5" width="1.3" height="1.3"/><rect x="945" y="733.6" width="1.3" height="1.3"/><rect x="950" y="733.8" width="1.3" height="1.3"/><rect x="955" y="734.0" width="1.3" height="1.3"/><rect x="960" y="734.1" width="1.3" height="1.3"/><rect x="965" y="734.3" width="1.3" height="1.3"/><rect x="970" y="734.5" width="1.3" height="1.3"/><rect x="975" y="734.6" width="1.3" height="1.3"/><rect x="980" y="734.8" width="1.3" height="1.3"/><rect x="985" y="735.0" width="1.3" height="1.3"/><rect x="990" y="735.1" width="1.3" height="1.3"/><rect x="995" y="735.3" width="1.3" height="1.3"/><rect x="1000" y="735.4" width="1.3" height="1.3"/><rect x="1005" y="735.6" width="1.3" height="1.3"/><rect x="1010" y="735.8" width="1.3" height="1.3"/><rect x="1015" y="735.9" width="1.3" height="1.3"/><rect x="1020" y="736.1" width="1.3" height="1.3"/><rect x="1025" y="736.3" width="1.3" height="1.3"/><rect x="1030" y="736.4" width="1.3" height="1.3"/><rect x="1035" y="736.6" width="1.3" height="1.3"/><rect x="1040" y="736.8" width="1.3" height="1.3"/><rect x="1045" y="736.9" width="1.3" height="1.3"/><rect x="1050" y="737.1" width="1.3" height="1.3"/><rect x="1055" y="737.3" width="1.3" height="1.3"/><rect x="1060" y="737.4" width="1.3" height="1.3"/><rect x="1065" y="737.6" width="1.3" height="1.3"/><rect x="1070" y="737.7" width="1.3" height="1.3"/><rect x="1075" y="737.9" width="1.3" height="1.3"/><rect x="1080" y="738.1" width="1.3" height="1.3"/><rect x="1085" y="738.2" width="1.3" height="1.3"/><rect x="1090" y="738.4" width="1.3" height="1.3"/><rect x="1095" y="738.6" width="1.3" height="1.3"/><rect x="1100" y="738.7" width="1.3" height="1.3"/><rect x="1105" y="738.9" width="1.3" height="1.3"/></svg>
<div class="a" style="left:1865px;top:471px;width:15px;height:553px;box-sizing:border-box;border:1px solid #bab6b1;background:#e4e2df"></div>
<div class="a" style="left:1866px;top:472px;width:13px;height:13px;background:linear-gradient(90deg,#fdfdfc,#efedea)"></div>
<div class="a" style="left:1865px;top:485px;width:15px;height:1px;background:#bab6b1"></div>
<div class="a" style="left:1865px;top:679px;width:15px;height:1px;background:#bab6b1"></div>
<div class="a" style="left:1866px;top:680px;width:13px;height:144px;background:linear-gradient(90deg,#fdfdfc,#efedea)"></div>
<div class="a" style="left:1865px;top:824px;width:15px;height:1px;background:#bab6b1"></div>
<div class="a" style="left:1865px;top:1009px;width:15px;height:1px;background:#bab6b1"></div>
<div class="a" style="left:1866px;top:1010px;width:13px;height:13px;background:linear-gradient(90deg,#fdfdfc,#efedea)"></div>
<div class="a" style="left:1868px;top:477px;width:0;height:0;border-left:4px solid transparent;border-right:4px solid transparent;border-bottom:4px solid #505050"></div>
<div class="a" style="left:1868px;top:1014px;width:0;height:0;border-left:4px solid transparent;border-right:4px solid transparent;border-top:4px solid #505050"></div>
<div class="a" style="left:525px;top:1023px;width:1341px;height:15px;box-sizing:border-box;border:1px solid #bab6b1;background:#e4e2df"></div>
<div class="a" style="left:526px;top:1024px;width:13px;height:13px;background:linear-gradient(#fdfdfc,#efedea)"></div>
<div class="a" style="left:539px;top:1023px;width:1px;height:15px;background:#bab6b1"></div>
<div class="a" style="left:973px;top:1023px;width:1px;height:15px;background:#bab6b1"></div>
<div class="a" style="left:974px;top:1024px;width:877px;height:13px;background:linear-gradient(#fdfdfc,#efedea)"></div>
<div class="a" style="left:1851px;top:1023px;width:1px;height:15px;background:#bab6b1"></div>
<div class="a" style="left:1852px;top:1024px;width:13px;height:13px;background:linear-gradient(#fdfdfc,#efedea)"></div>
<div class="a" style="left:530px;top:1026px;width:0;height:0;border-top:4px solid transparent;border-bottom:4px solid transparent;border-right:4px solid #505050"></div>
<div class="a" style="left:1856px;top:1026px;width:0;height:0;border-top:4px solid transparent;border-bottom:4px solid transparent;border-left:4px solid #505050"></div>
<div class="a" style="left:1865px;top:1023px;width:15px;height:15px;box-sizing:border-box;border:1px solid #bab6b1;background:#ece9e5"></div>
</body></html>
